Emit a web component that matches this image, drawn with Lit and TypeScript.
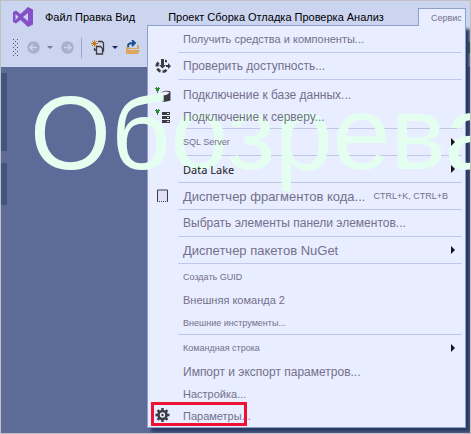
import { LitElement, html, css, svg, nothing } from "lit";
import { customElement } from "lit/decorators.js";
import { classMap } from "lit/directives/class-map.js";

type Size = "s" | "m" | "l" | "xl";
interface Item {
  label: string;
  size: Size;
  icon?: unknown;
  keys?: string;
  sub?: boolean;
  dark?: boolean;
  marked?: boolean;
}
interface Group {
  kind: string;
  items: Item[];
}

const plug = svg`<path d="M1 0h1v1h1v-1h1v1h1v1h-1v2h-1v2h-1v-2h-1v-2h-1v-1h1z" fill="#2f8a2f"/>`;

const checkIcon = svg`<svg viewBox="0 0 16 16" width="16" height="16">
  <path d="M3.500 4.500a5 5 0 0 0 -1.500 4" fill="none" stroke="#3c3c40" stroke-width="3"/>
  <path d="M2.500 10.500a5 5 0 0 0 3 3M7.500 13.800a5 5 0 0 0 4-2" fill="none" stroke="#3c3c40" stroke-width="2.600"/>
  <path d="M6 1h3v6h2l-3.500 3.500-3.500-3.500h2z" fill="#3c3c40"/>
  <path d="M10 1.500l2 1v2l-2-.5zM11 7h2v-2l3 3-3 3v-2h-2z" fill="#3c3c40"/></svg>`;
const dbIcon = svg`<svg viewBox="0 0 16 16" width="16" height="16">${plug}
  <path d="M7 5q4-2 8.500-.5v9q-3 1.500-8.500 1z" fill="#3c3c40"/><path d="M7 5.500q4-2 7.500 0-2 3-7.500 3z" fill="#e8edff"/></svg>`;
const serverIcon = svg`<svg viewBox="0 0 16 16" width="16" height="16">${plug}
  <path d="M7 3h8v3h-8zM7 7h8v3h-8zM7 11h8v3h-8z" fill="#3c3c40"/>
  <path d="M12 4h2v1h-2zM12 8h2v1h-2zM12 12h2v1h-2z" fill="#e8edff"/></svg>`;
const snippetIcon = svg`<svg viewBox="0 0 16 16" width="16" height="16">
  <path d="M2.500 13v-11h10v11" fill="#e0e0f8" stroke="#3c3c46"/>
  <path d="M2 13.500h11" stroke="#3c3c46" stroke-dasharray="1 1"/></svg>`;
const gearIcon = svg`<svg viewBox="0 0 16 16" width="16" height="16">
  <circle cx="7.500" cy="7" r="4" fill="none" stroke="#3c3c40" stroke-width="2.600"/>
  ${[0, 45, 90, 135].map((a) => svg`<path d="M6.300 0h2.400v2.500h-2.400zM6.300 11.500h2.400v2.500h-2.400z" fill="#3c3c40" transform="rotate(${a} 7.500 7)"/>`)}
  <circle cx="7.500" cy="7" r="1.200" fill="#3c3c40"/></svg>`;

const groups: Group[] = [
  { kind: "single", items: [{ label: "Получить средства и компоненты...", size: "m" }] },
  { kind: "single", items: [{ label: "Проверить доступность...", size: "l", icon: checkIcon }] },
  {
    kind: "connect",
    items: [
      { label: "Подключение к базе данных...", size: "l", icon: dbIcon },
      { label: "Подключение к серверу...", size: "l", icon: serverIcon },
    ],
  },
  { kind: "single", items: [{ label: "SQL Server", size: "s", sub: true }] },
  { kind: "single", items: [{ label: "Data Lake", size: "m", sub: true, dark: true }] },
  {
    kind: "single",
    items: [{ label: "Диспетчер фрагментов кода...", size: "xl", icon: snippetIcon, keys: "CTRL+K, CTRL+B" }],
  },
  { kind: "single", items: [{ label: "Выбрать элементы панели элементов...", size: "l" }] },
  { kind: "single", items: [{ label: "Диспетчер пакетов NuGet", size: "xl", sub: true }] },
  {
    kind: "external",
    items: [
      { label: "Создать GUID", size: "s" },
      { label: "Внешняя команда 2", size: "m" },
      { label: "Внешние инструменты...", size: "s" },
    ],
  },
  {
    kind: "settings",
    items: [
      { label: "Командная строка", size: "s", sub: true },
      { label: "Импорт и экспорт параметров...", size: "l" },
      { label: "Настройка...", size: "m" },
      { label: "Параметры...", size: "m", icon: gearIcon, marked: true },
    ],
  },
];

@customElement("tools-menu")
export class ToolsMenu extends LitElement {
  static styles = css`
    :host {
      display: block;
      box-sizing: border-box;
      padding-right: 3px;
      background: #e8edff;
      border: 1px solid #8e9fcb;
      box-shadow: 4px 4px 3px #2b3a63;
    }
    .line { height: 1px; margin-left: 30px; background: #bfc8e8; }
    .item {
      display: flex;
      align-items: center;
      box-sizing: border-box;
      width: 100%;
      height: 26px;
      padding: 0;
      border: 0;
      background: none;
      color: #74708c;
      font: 12px "Liberation Sans", Arial, sans-serif;
      text-align: left;
      white-space: nowrap;
      position: relative;
    }
    .connect { padding-top: 4px; }
    .external { padding-top: 1px; }
    .connect .item, .settings .item + .item { height: 22px; }
    .external .item { height: 23px; }
    .icon { display: flex; justify-content: center; width: 30px; margin-right: 5px; }
    .icon svg { display: block; }
    .label, .keys, .arrow { position: relative; z-index: 2; }
    .s { font-size: 9px; }
    .m { font-size: 11px; }
    .l { font-size: 12px; }
    .xl { font-size: 13px; }
    .dark { color: #1c1c24; font-family: "Noto Sans", sans-serif; }
    .keys { margin-left: 8px; font-size: 9px; }
    .arrow {
      margin-left: auto;
      margin-right: 7px;
      border: 4px solid transparent;
      border-left: 4px solid #15151b;
      border-right: 0;
    }
    .marked::after {
      content: "";
      position: absolute;
      inset: -3px auto 1px 3px;
      width: 96px;
      box-sizing: border-box;
      border: 3px solid #ee1133;
      z-index: 3;
    }
  `;

  render() {
    return groups.map(
      (g, i) => html`${i ? html`<div class="line"></div>` : nothing}
        <div class="group ${g.kind}" role="group">
          ${g.items.map(
            (it) => html`<button class=${classMap({ item: true, marked: !!it.marked, dark: !!it.dark })} role="menuitem">
              <span class="icon">${it.icon ?? nothing}</span>
              <span class="label ${it.size}">${it.label}</span>
              ${it.keys ? html`<span class="keys">${it.keys}</span>` : nothing}
              ${it.sub ? html`<span class="arrow"></span>` : nothing}
            </button>`
          )}
        </div>`
    );
  }
}

@customElement("app-root")
export class AppRoot extends LitElement {
  static styles = css`
    :host {
      display: block;
      position: relative;
      box-sizing: border-box;
      min-height: 100vh;
      overflow: hidden;
      border: 1px solid #c0c0c0;
      background: #5d6b99;
      font: 11px "Liberation Sans", Arial, sans-serif;
      color: #000;
    }
    button { border: 0; padding: 0; background: none; font: inherit; color: inherit; white-space: nowrap; }
    header { background: #ccd5f0; }
    .menubar { display: flex; align-items: flex-start; height: 25px; padding: 6px 4px 0 12px; }
    .logo { display: block; }
    .names { display: flex; gap: 3px; height: 20px; margin-left: 11px; }
    .names + .names { margin-left: 33px; }
    .tools { position: relative; margin-left: auto; padding-top: 1px; }
    .tab {
      display: block;
      position: relative;
      z-index: 1;
      box-sizing: border-box;
      width: 48px;
      height: 18px;
      padding-left: 12px;
      background: #e8edff;
      border: 1px solid #8e9fcb;
      border-bottom: 0;
      color: #74708c;
      font-size: 9px;
      text-align: left;
      overflow: hidden;
    }
    tools-menu { position: absolute; right: 0; top: 18px; width: 319px; }
    .toolbar { display: flex; align-items: center; height: 31px; padding: 0 0 4px 11px; }
    .toolbar svg { display: block; }
    .toolbar .run { margin-left: auto; width: 2px; height: 11px; background: #2f8a2f; }
    .back { margin-left: 9px; }
    .drop { margin: 0 8px 0 7px; border: 3px solid transparent; border-top-color: #777b88; border-bottom: 0; }
    .drop.on { border-top-color: #1b2a50; }
    .split { width: 1px; height: 20px; margin: 0 9px 0 7px; background: #98a5cf; }
    .docks { display: flex; flex-direction: column; gap: 12px; width: 6px; padding-top: 6px; }
    .dock { height: 78px; background: #405580; }
    .dock + .dock { height: 42px; }
    .watermark {
      position: absolute;
      z-index: 1;
      left: 29px;
      top: 73px;
      font-size: 104px;
      line-height: 119px;
      white-space: nowrap;
      color: #e4fff0;
      pointer-events: none;
    }
  `;

  private names(list: string[]) {
    return html`<div class="names">${list.map((n) => html`<button>${n}</button>`)}</div>`;
  }

  private circle(arrow: string) {
    return svg`<svg width="13" height="13" viewBox="0 0 13 13"><circle cx="6.500" cy="6.500" r="6.200" fill="#a9b0c6"/>
      <path d=${arrow} fill="none" stroke="#ccd5f0" stroke-width="1.500"/></svg>`;
  }

  render() {
    return html`
      <header>
        <nav class="menubar">
          <svg class="logo" width="21" height="20" viewBox="0 0 21 20">
            <path fill-rule="evenodd" fill="#8650c8" d="M15 0l5 2.500v15l-5 2.500-7.500-7-4.500 3.500-3-1.500v-10l3-1.500 4.500 3.500zM15 6l-5 4 5 4zM2.500 7v6l3-3z"/>
          </svg>
          ${this.names(["Файл", "Правка", "Вид"])}
          ${this.names(["Проект", "Сборка", "Отладка", "Проверка", "Анализ"])}
          <div class="tools">
            <button class="tab" aria-expanded="true">Сервис</button>
            <tools-menu role="menu"></tools-menu>
          </div>
        </nav>
        <div class="toolbar">
          <svg width="6" height="17" viewBox="0 0 6 17">
            ${[0, 4, 8, 12, 16].map((y) => svg`<path d="M1 ${y}h1v1h-1zM5 ${y}h1v1h-1z" fill="#4a5878"/>`)}
            ${[2, 6, 10, 14].map((y) => svg`<path d="M3 ${y}h1v1h-1z" fill="#4a5878"/>`)}
          </svg>
          <button class="back" aria-label="Назад">${this.circle("M3 6.5h7M6 3.5l-3 3 3 3")}</button>
          <span class="drop"></span>
          <button aria-label="Вперед">${this.circle("M3 6.5h7M7 3.5l3 3-3 3")}</button>
          <span class="split"></span>
          <button aria-label="Создать проект">
            <svg width="14" height="15" viewBox="0 0 14 15">
              <path d="M7 1.500h4l1.500 1.500v8h-1M3.500 8v2h1.500M5.500 13.500v-7h4l2 2v5.500h-6z" fill="none" stroke="#3c3c40" stroke-width="1.300"/>
              <path d="M3.500 0v7M0 3.500h7M1 1l5 5M6 1l-5 5" stroke="#c27a1a" stroke-width="1"/>
            </svg>
          </button>
          <span class="drop on"></span>
          <button aria-label="Открыть">
            <svg width="15" height="15" viewBox="0 0 15 15">
              <path d="M0 14v-7h3l1 1h7v-3h2v5h1l-2 4z" fill="#dca75c"/>
              <path d="M3 9.500h10" stroke="#ccd5f0"/>
              <path d="M2.500 7q-2-4 5-4M6 0l3 3-3 3" fill="none" stroke="#124f8c" stroke-width="1.800"/>
            </svg>
          </button>
          <span class="run"></span>
        </div>
      </header>
      <div class="docks"><div class="dock"></div><div class="dock"></div></div>
      <div class="watermark">Обозрева</div>
    `;
  }
}
